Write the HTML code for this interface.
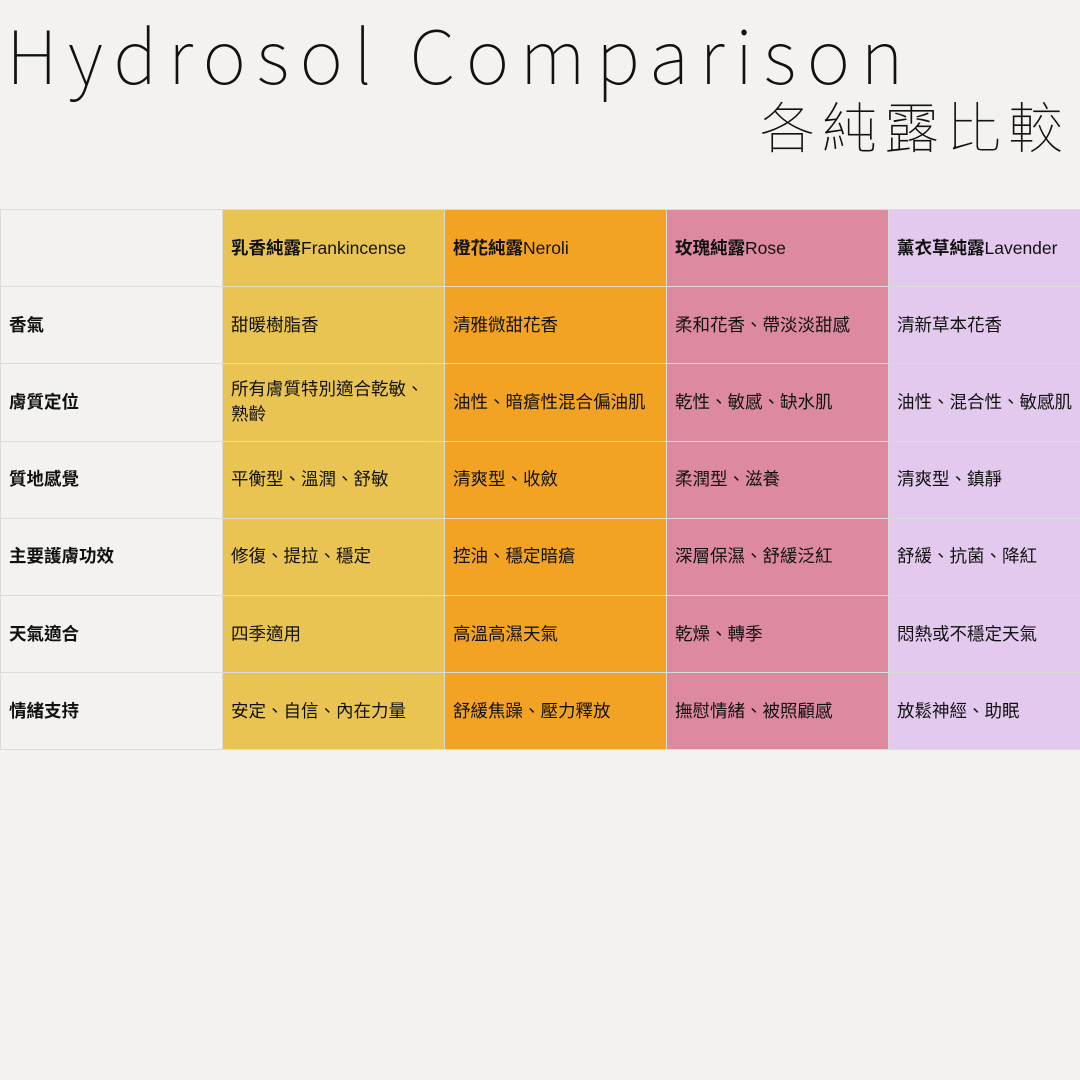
<!DOCTYPE html>
<html><head><meta charset="utf-8"><style>
body{margin:0;width:1080px;height:1080px;background:#f3f2ee;position:relative;overflow:hidden;font-family:"Liberation Sans","Noto Sans CJK TC",sans-serif;color:#111}
.t1{position:absolute;left:6px;top:3px;font-family:"Noto Sans CJK JP","Liberation Sans",sans-serif;font-weight:100;font-size:74px;letter-spacing:10.5px;line-height:100px;white-space:nowrap}
.t2{position:absolute;right:10px;top:86px;font-family:"Noto Sans CJK TC",sans-serif;font-weight:100;font-size:55px;letter-spacing:7px;line-height:76px;white-space:nowrap}
table{position:absolute;left:0;top:209px;border-collapse:collapse;table-layout:fixed;width:1082px}
td{border:1.5px solid #dcdbd8;height:76.2px;padding:0 8px;font-size:17.5px;line-height:25px;vertical-align:middle}
td:first-child{font-weight:bold;background:#f3f2ee}
.a{background:#e9c452}.b{background:#f3a324}.c{background:#dd8aa0}.d{background:#e3c9ee}
b{font-weight:bold}
</style></head><body>
<div class="t1">Hydrosol Comparison</div>
<div class="t2">各純露比較</div>
<table>
<colgroup><col style="width:222px"><col style="width:222px"><col style="width:222px"><col style="width:222px"><col style="width:194px"></colgroup>
<tr><td></td><td class="a"><b>乳香純露</b>Frankincense</td><td class="b"><b>橙花純露</b>Neroli</td><td class="c"><b>玫瑰純露</b>Rose</td><td class="d"><b>薰衣草純露</b>Lavender</td></tr>
<tr><td>香氣</td><td class="a">甜暖樹脂香</td><td class="b">清雅微甜花香</td><td class="c">柔和花香、帶淡淡甜感</td><td class="d">清新草本花香</td></tr>
<tr><td>膚質定位</td><td class="a">所有膚質特別適合乾敏、<br>熟齡</td><td class="b">油性、暗瘡性混合偏油肌</td><td class="c">乾性、敏感、缺水肌</td><td class="d">油性、混合性、敏感肌</td></tr>
<tr><td>質地感覺</td><td class="a">平衡型、溫潤、舒敏</td><td class="b">清爽型、收斂</td><td class="c">柔潤型、滋養</td><td class="d">清爽型、鎮靜</td></tr>
<tr><td>主要護膚功效</td><td class="a">修復、提拉、穩定</td><td class="b">控油、穩定暗瘡</td><td class="c">深層保濕、舒緩泛紅</td><td class="d">舒緩、抗菌、降紅</td></tr>
<tr><td>天氣適合</td><td class="a">四季適用</td><td class="b">高溫高濕天氣</td><td class="c">乾燥、轉季</td><td class="d">悶熱或不穩定天氣</td></tr>
<tr><td>情緒支持</td><td class="a">安定、自信、內在力量</td><td class="b">舒緩焦躁、壓力釋放</td><td class="c">撫慰情緒、被照顧感</td><td class="d">放鬆神經、助眠</td></tr>
</table>
</body></html>
